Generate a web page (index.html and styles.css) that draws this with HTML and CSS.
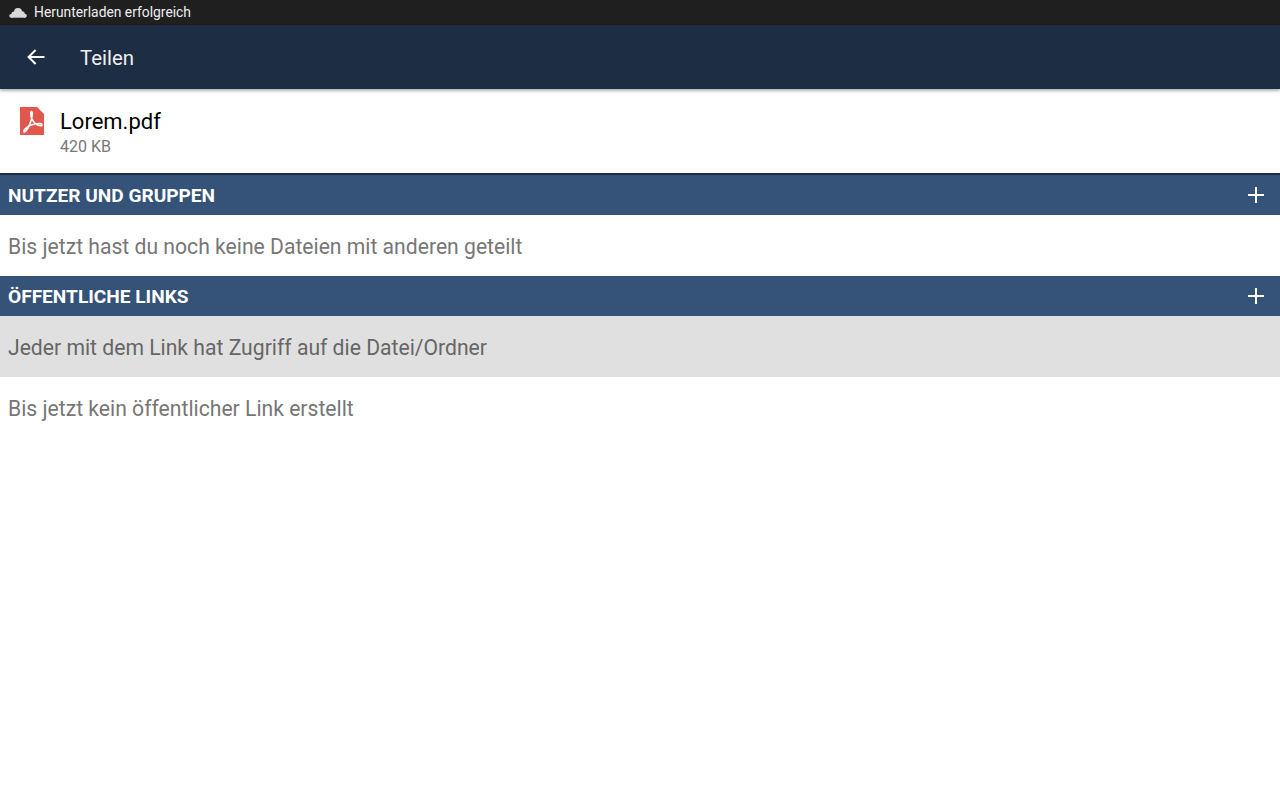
FILE: index.html
```html
<!DOCTYPE html>
<html lang="de">
<head>
    <meta charset="UTF-8">
    <meta name="viewport" content="width=device-width, initial-scale=1.0">
    <title>Teilen</title>
    <link rel="stylesheet" href="styles.css">
</head>
<body>
    <div class="status-bar">
        <svg class="status-icon" width="18" height="11" viewBox="0 0 18 11">
            <g fill="#d8d8d8">
                <circle cx="9" cy="5" r="4"/>
                <circle cx="5" cy="7.2" r="2.6"/>
                <circle cx="13" cy="7" r="2.8"/>
                <circle cx="2.2" cy="8.8" r="1.9"/>
                <circle cx="15.8" cy="8.8" r="2"/>
                <rect x="2" y="8" width="14" height="2.7"/>
            </g>
        </svg>
        <span>Herunterladen erfolgreich</span>
    </div>
    <header class="action-bar">
        <svg class="back-icon" width="18" height="16" viewBox="0 0 18 16">
            <path fill="none" stroke="#fff" stroke-width="2" d="M17.5 8H2M8.6 1L1.6 8L8.6 15"/>
        </svg>
        <h1>Teilen</h1>
    </header>
    <div class="file-row">
        <svg class="file-icon" width="24" height="28" viewBox="0 0 24 28">
            <path fill="#e2574c" d="M0 0H17L24 7V28H0Z"/>
            <path fill="none" stroke="#fff" stroke-width="1.6" d="M11.3 4.5C10.3 4.8 10.6 8.5 12 12C13.5 15.5 17 18.5 21 18.8C22.5 18.8 22.3 16.8 20.5 16.6C16.5 16.2 9 18 5.5 21.5C3 24 3.5 25.6 5 24.5C8.5 22 12.5 12 12.3 6.5C12.2 4.9 11.9 4.4 11.3 4.5Z"/>
        </svg>
        <div class="file-info">
            <div class="file-name">Lorem.pdf</div>
            <div class="file-size">420 KB</div>
        </div>
    </div>
    <section class="section-head first">
        <span>NUTZER UND GRUPPEN</span>
        <svg width="16" height="16" viewBox="0 0 16 16"><path stroke="#fff" stroke-width="2" d="M8 0V16M0 8H16"/></svg>
    </section>
    <p class="message">Bis jetzt hast du noch keine Dateien mit anderen geteilt</p>
    <section class="section-head">
        <span>ÖFFENTLICHE LINKS</span>
        <svg width="16" height="16" viewBox="0 0 16 16"><path stroke="#fff" stroke-width="2" d="M8 0V16M0 8H16"/></svg>
    </section>
    <p class="message hint">Jeder mit dem Link hat Zugriff auf die Datei/Ordner</p>
    <p class="message">Bis jetzt kein öffentlicher Link erstellt</p>
</body>
</html>
```

FILE: styles.css
```css
body {
    margin: 0;
    background: #fff;
    font-family: Roboto, sans-serif;
    overflow: hidden;
}
.status-bar {
    display: flex;
    align-items: center;
    height: 25px;
    padding-left: 9px;
    background: #1f1f1f;
    color: #eee;
    font-size: 13.85px;
}
.status-bar span {
    margin-bottom: 1px;
}
.status-icon {
    margin-right: 7px;
}
.action-bar {
    display: flex;
    align-items: center;
    height: 64px;
    padding-left: 27px;
    background: #1d2d44;
    box-shadow: 0 2px 3px rgba(0, 0, 0, 0.3);
    position: relative;
}
.action-bar h1 {
    margin: 2px 0 0 35px;
    font-size: 20.4px;
    font-weight: 400;
    color: #eee;
}
.back-icon {
    margin-bottom: 1px;
}
.file-row {
    display: flex;
    height: 84px;
    padding-left: 20px;
}
.file-icon {
    margin-top: 18px;
}
.file-info {
    margin-left: 16px;
    padding-top: 19px;
}
.file-name {
    font-size: 22px;
    line-height: 28px;
    color: #000;
}
.file-size {
    font-size: 16px;
    line-height: 21px;
    color: #777;
}
.section-head {
    display: flex;
    align-items: center;
    justify-content: space-between;
    height: 40px;
    padding: 0 16px 0 8px;
    background: #355278;
    color: #fff;
    font-size: 19.1px;
    font-weight: 700;
}
.section-head.first {
    border-top: 2px solid #1d2d44;
}
.message {
    display: flex;
    align-items: center;
    height: 61px;
    margin: 0;
    padding: 2px 0 0 8px;
    box-sizing: border-box;
    font-size: 21.15px;
    color: #777;
}
.message.hint {
    background: #e0e0e0;
    color: #666;
}
```
